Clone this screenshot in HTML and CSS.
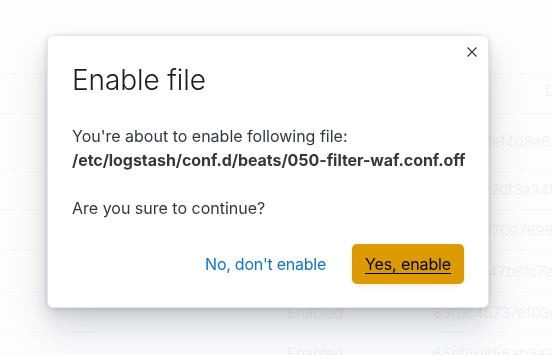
FILE: index.html
```html
<!DOCTYPE html>
<html lang="en">
<head>
<meta charset="utf-8">
<title>Enable file</title>
<link rel="stylesheet" href="styles.css">
</head>
<body>
<div class="page">
  <div class="table-head">
    <span class="head-a">Enabled</span>
    <span class="head-b">Description</span>
  </div>
  <div class="row row-first">
    <span class="cell-status">Enabled</span>
    <span class="cell-hash">b0a2c91ef4d8e6</span>
  </div>
  <div class="row">
    <span class="cell-status">Enabled</span>
    <span class="cell-hash">c18e0a27df3a349e</span>
  </div>
  <div class="row">
    <span class="cell-status">Enabled</span>
    <span class="cell-hash">e2b94c17097698b3</span>
  </div>
  <div class="row">
    <span class="cell-status">Enabled</span>
    <span class="cell-hash">9d0f3a147b6fc7e1</span>
  </div>
  <div class="row">
    <span class="cell-status">Enabled</span>
    <span class="cell-hash">83f0c45737ef03c</span>
  </div>
  <div class="row">
    <span class="cell-status">Enabled</span>
    <span class="cell-hash">65df60856ab3a90</span>
  </div>
</div>

<div class="modal" role="dialog" aria-labelledby="modal-title">
  <button class="close" aria-label="Close">
    <svg width="10" height="10" viewBox="0 0 10 10" aria-hidden="true">
      <path d="M0.5 0.5 L9.5 9.5 M9.5 0.5 L0.5 9.5" stroke="#343741" stroke-width="1.1" fill="none"/>
    </svg>
  </button>
  <div class="modal-header">
    <h1 id="modal-title" class="modal-title">Enable file</h1>
  </div>
  <div class="modal-body">
    <p class="para">You're about to enable following file:<br><strong class="path">/etc/logstash/conf.d/beats/050-filter-waf.conf.off</strong></p>
    <p class="para">Are you sure to continue?</p>
  </div>
  <div class="modal-footer">
    <button class="btn-empty">No, don't enable</button>
    <button class="btn-fill">Yes, enable</button>
  </div>
</div>
</body>
</html>
```
FILE: styles.css
```css
* { box-sizing: border-box; }

html, body {
  margin: 0;
  padding: 0;
}

body {
  background: #fdfdfe;
  font-family: Inter, "Noto Sans", sans-serif;
  color: #343741;
  width: 552px;
  height: 355px;
  overflow: hidden;
}

/* faint page behind the overlay */
.page {
  padding-top: 74px;
  color: #eef0f3;
  font-size: 15px;
  font-weight: 300;
}

.table-head {
  display: grid;
  grid-template-columns: 481px 64px 1fr;
  height: 40px;
  padding-top: 6px;
  border-top: 1px solid #f8f9fa;
  border-bottom: 1px solid #f8f9fa;
  white-space: nowrap;
  overflow: hidden;
}

.head-a { grid-column: 2 / 3; margin-left: -64px; }
.head-b { grid-column: 3 / 4; }

.row {
  display: grid;
  grid-template-columns: 287px 146px 1fr;
  align-items: center;
  height: 41px;
  border-bottom: 1px solid #f8f9fa;
  white-space: nowrap;
  overflow: hidden;
}

.row-first { height: 55px; }

.cell-status { grid-column: 2 / 3; }
.cell-hash { grid-column: 3 / 4; }

/* modal */
.modal {
  position: fixed;
  top: 35px;
  left: 47px;
  width: 442px;
  background: #fff;
  border: 1px solid #e3e6eb;
  border-radius: 6px;
  box-shadow:
    0 1px 5px rgba(0, 0, 0, 0.10),
    0 4px 13px rgba(0, 0, 0, 0.08),
    0 10px 24px rgba(20, 30, 50, 0.09),
    0 24px 40px rgba(20, 30, 50, 0.12);
}

.close {
  position: absolute;
  top: 11px;
  right: 11px;
  width: 10px;
  height: 10px;
  padding: 0;
  margin: 0;
  border: 0;
  background: none;
  display: block;
  line-height: 0;
}

.modal-header {
  padding: 24px 24px 0;
}

.modal-title {
  margin: 0;
  font-size: 28px;
  line-height: 40px;
  font-weight: 300;
  color: #1a1c21;
  letter-spacing: -0.1px;
}

.modal-body {
  padding: 24px 24px 0;
}

.para {
  margin: 0 0 24px;
  font-size: 16px;
  line-height: 24px;
  color: #343741;
}

.para:last-child { margin-bottom: 0; }

.path {
  font-weight: 700;
  color: #343741;
  white-space: nowrap;
  letter-spacing: -0.05px;
}

.modal-footer {
  display: flex;
  justify-content: flex-end;
  align-items: center;
  gap: 26px;
  padding: 24px 24px 23px;
}

.btn-empty {
  border: 0;
  background: none;
  padding: 0;
  font-family: inherit;
  font-size: 16px;
  line-height: 24px;
  letter-spacing: -0.25px;
  color: #0f76c8;
}

.btn-fill {
  width: 112px;
  height: 40px;
  padding: 0;
  border: 0;
  border-radius: 5px;
  background: #dd9900;
  color: #000;
  font-family: inherit;
  font-size: 16px;
  line-height: 24px;
  letter-spacing: -0.1px;
  text-decoration: underline;
  text-underline-offset: 3px;
  box-shadow: 0 2px 5px rgba(180, 120, 0, 0.15);
}
```
